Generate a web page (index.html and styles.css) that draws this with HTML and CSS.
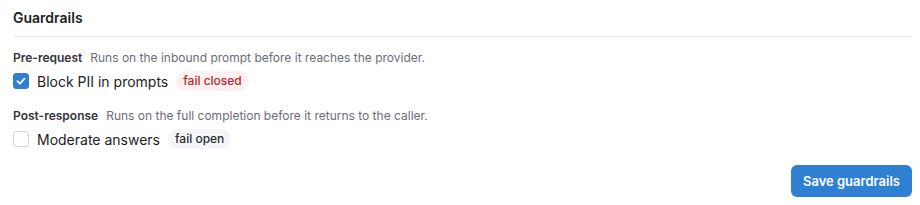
FILE: index.html
```html
<!DOCTYPE html>
<html lang="en">
<head>
  <meta charset="UTF-8">
  <meta name="viewport" content="width=device-width, initial-scale=1.0">
  <title>Guardrails</title>
  <link rel="stylesheet" href="styles.css">
</head>
<body>

  <div class="panel">
    <h2 class="title">Guardrails</h2>

    <div class="group">
      <div class="group-head">
        <span class="stage">Pre-request</span>
        <span class="desc">Runs on the inbound prompt before it reaches the provider.</span>
      </div>
      <label class="rule">
        <span class="box checked">
          <svg width="12" height="12" viewBox="0 0 12 12"><path d="M2.5 6.2l2.4 2.4 4.6-5" fill="none" stroke="#fff" stroke-width="1.8" stroke-linecap="round" stroke-linejoin="round"/></svg>
        </span>
        <span class="rule-name">Block PII in prompts</span>
        <span class="badge closed">fail closed</span>
      </label>
    </div>

    <div class="group">
      <div class="group-head">
        <span class="stage">Post-response</span>
        <span class="desc">Runs on the full completion before it returns to the caller.</span>
      </div>
      <label class="rule">
        <span class="box"></span>
        <span class="rule-name">Moderate answers</span>
        <span class="badge open">fail open</span>
      </label>
    </div>

    <div class="actions">
      <button class="save">Save guardrails</button>
    </div>
  </div>

</body>
</html>
```

FILE: styles.css
```css
body {
  margin: 0;
  background: #fff;
  font-family: Inter, "Noto Sans", sans-serif;
  color: #1d1d22;
}
.panel {
  padding: 8px 8px 8px 13px;
}
.title {
  margin: 0;
  font-size: 14px;
  line-height: 20px;
  font-weight: 600;
  padding-bottom: 8px;
  border-bottom: 1px solid #e1e6ee;
}
.group {
  margin-top: 13px;
}
.group + .group {
  margin-top: 17px;
}
.group-head {
  display: flex;
  gap: 8px;
  font-size: 12px;
  line-height: 16px;
}
.stage {
  font-weight: 600;
  color: #33333b;
}
.desc {
  color: #6c6c78;
}
.rule {
  display: flex;
  align-items: center;
  gap: 8px;
  margin-top: 5px;
  height: 20px;
  font-size: 14px;
}
.box {
  width: 16px;
  height: 16px;
  box-sizing: border-box;
  border: 1px solid #cfd6e0;
  border-radius: 3px;
  background: #fff;
  display: flex;
  align-items: center;
  justify-content: center;
}
.box.checked {
  background: #2f7fd2;
  border-color: #2f7fd2;
}
.rule-name {
  color: #1d1d22;
}
.badge {
  font-size: 12px;
  line-height: 20px;
  padding: 0 7px;
  border-radius: 10px;
  font-weight: 500;
}
.badge.closed {
  background: #fdf0f0;
  color: #b2282d;
}
.badge.open {
  background: #f3f5f9;
  color: #2b2b33;
}
.actions {
  display: flex;
  justify-content: flex-end;
  margin-top: 16px;
}
.save {
  height: 32px;
  padding: 0 12px;
  border: none;
  border-radius: 6px;
  background: #2f80d2;
  color: #fff;
  font-family: inherit;
  font-size: 13px;
  font-weight: 600;
  cursor: pointer;
}
```
